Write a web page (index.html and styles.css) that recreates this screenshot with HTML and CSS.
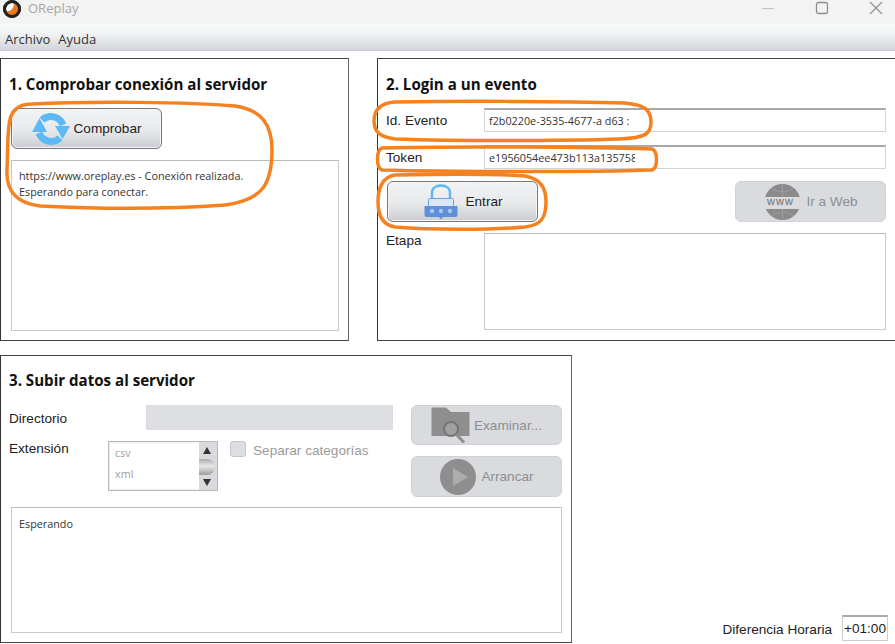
FILE: index.html
```html
<!DOCTYPE html>
<html lang="es">
<head>
    <meta charset="UTF-8">
    <meta name="viewport" content="width=device-width, initial-scale=1.0">
    <title>OReplay</title>
    <link rel="stylesheet" href="styles.css">
</head>
<body>
    <header class="titlebar">
        <svg class="logo" width="20" height="20" viewBox="0 0 20 20">
            <circle cx="10" cy="10" r="7.500" fill="#fff" stroke="#222" stroke-width="3"/>
            <path d="M3.500 12 C8 13 12 10 12 4 C17 6 18 12 14 15.500 C10 18 5 16 3.500 12Z" fill="#f0781e"/>
            <circle cx="10" cy="10" r="7.500" fill="none" stroke="#222" stroke-width="3"/>
        </svg>
        <span class="app-name">OReplay</span>
        <div class="window-btns">
            <svg width="14" height="14" viewBox="0 0 14 14"><path d="M1 7.500H13" stroke="#c4c4c4" stroke-width="1.200"/></svg>
            <svg width="14" height="14" viewBox="0 0 14 14"><rect x="1.500" y="1.500" width="11" height="11" rx="2" fill="none" stroke="#8f8f8f" stroke-width="1.300"/></svg>
            <svg width="14" height="14" viewBox="0 0 14 14"><path d="M1 1L13 13M13 1L1 13" stroke="#8f8f8f" stroke-width="1.100"/></svg>
        </div>
    </header>
    <nav class="menubar">
        <span>Archivo</span>
        <span>Ayuda</span>
    </nav>

    <main class="content">
        <div class="top-row">
            <section class="panel panel-check">
                <h2>1. Comprobar conexión al servidor</h2>
                <button class="btn btn-check">
                    <svg width="38" height="32" viewBox="0 0 38 32">
                        <path d="M10 7 A13 13 0 0 1 31 12" fill="none" stroke="#5cb9f6" stroke-width="7"/>
                        <path d="M28 25 A13 13 0 0 1 7 20" fill="none" stroke="#5cb9f6" stroke-width="7"/>
                        <path d="M23 13H38L30.500 26Z" fill="#5cb9f6"/>
                        <path d="M0 19H15L7.500 5Z" fill="#5cb9f6"/>
                    </svg>
                    <span>Comprobar</span>
                </button>
                <div class="log log-check">
                    <p>https://www.oreplay.es - Conexión realizada.</p>
                    <p>Esperando para conectar.</p>
                </div>
            </section>

            <section class="panel panel-login">
                <h2>2. Login a un evento</h2>
                <div class="field-row row-event">
                    <label>Id. Evento</label>
                    <div class="input"><span class="value">f2b0220e-3535-4677-a d63 :</span></div>
                </div>
                <div class="field-row row-token">
                    <label>Token</label>
                    <div class="input"><span class="value value-token">e1956054ee473b113a135758</span></div>
                </div>
                <div class="login-btns">
                    <button class="btn btn-enter">
                        <svg width="34" height="36" viewBox="0 0 34 36">
                            <path d="M8 15V9 C8 4 12 1.500 17 1.500 C22 1.500 26 4 26 9V15" fill="none" stroke="#5cb9f6" stroke-width="2.500"/>
                            <rect x="4.500" y="14.500" width="25" height="8" rx="1" fill="#dbe7f6" stroke="#6f9fdf" stroke-width="1"/>
                            <path d="M0.500 22H33.500V31 C33.500 32.500 32.500 33 31 33H19L17 35.500L15 33H3 C1.500 33 0.500 32.500 0.500 31Z" fill="#5d90d8"/>
                            <circle cx="8" cy="27" r="2.200" fill="#a9c6f0"/>
                            <circle cx="17" cy="27" r="2.200" fill="#a9c6f0"/>
                            <circle cx="26" cy="27" r="2.200" fill="#a9c6f0"/>
                        </svg>
                        <span>Entrar</span>
                    </button>
                    <button class="btn btn-off btn-web">
                        <svg width="39" height="36" viewBox="0 0 39 36">
                            <circle cx="19.500" cy="18" r="18" fill="#8b8b8b"/>
                            <path d="M19.500 0V36M9 4 C15 9 24 9 30 4M9 32 C15 27 24 27 30 32" fill="none" stroke="#9d9ea1" stroke-width="1"/>
                            <rect x="0" y="13" width="39" height="12" fill="#d9dbdf"/>
                        </svg>
                        <span class="www">www</span>
                        <span>Ir a Web</span>
                    </button>
                </div>
                <div class="field-row row-stage">
                    <label>Etapa</label>
                    <div class="log log-stage"></div>
                </div>
            </section>
        </div>

        <section class="panel panel-upload">
            <h2>3. Subir datos al servidor</h2>
            <div class="upload-body">
                <div class="upload-left">
                    <div class="dir-row">
                        <label>Directorio</label>
                        <div class="dir-input"></div>
                    </div>
                    <div class="ext-row">
                        <label>Extensión</label>
                        <div class="listbox">
                            <div class="list-items">
                                <span>csv</span>
                                <span>xml</span>
                            </div>
                            <div class="scrollbar">
                                <i class="arrow-up"></i>
                                <i class="thumb"></i>
                                <i class="arrow-down"></i>
                            </div>
                        </div>
                        <div class="check-wrap">
                            <span class="checkbox"></span>
                            <span>Separar categorías</span>
                        </div>
                    </div>
                </div>
                <div class="upload-btns">
                    <button class="btn btn-off btn-browse">
                        <svg width="39" height="37" viewBox="0 0 39 37">
                            <path d="M0.500 0.500H15L20 5H38.500V29H0.500Z" fill="#8e8e8e"/>
                            <circle cx="20" cy="22" r="7" fill="#a0a1a3" stroke="#757575" stroke-width="2"/>
                            <path d="M25 27L33 35.500" stroke="#8e8e8e" stroke-width="3"/>
                        </svg>
                        <span>Examinar...</span>
                    </button>
                    <button class="btn btn-off btn-run">
                        <svg width="38" height="38" viewBox="0 0 38 38">
                            <circle cx="19" cy="19" r="18" fill="#8e8e8e"/>
                            <path d="M14 10L29 19L14 28Z" fill="#acadaf"/>
                        </svg>
                        <span>Arrancar</span>
                    </button>
                </div>
            </div>
            <div class="log log-upload">
                <p>Esperando</p>
            </div>
        </section>

        <div class="time-diff">
            <span class="time-label">Diferencia Horaria</span>
            <div class="time-box">+01:00</div>
        </div>
    </main>

    <!-- marcas a mano sobre la captura -->
    <svg class="marks" width="895" height="644" viewBox="0 0 895 644">
        <path d="M32 104 C90 101 190 102 235 106 C262 110 272 125 272 150 C272 185 262 200 225 205 C170 209 100 209 40 206 C15 203 6 190 7 170 C8 150 7 125 11 116 C15 107 22 104 32 104Z"/>
        <path d="M395 102 C450 101 560 101 625 103 C645 105 651 110 651 122 C651 134 645 138 620 139 C560 141 450 141 395 139 C380 137 374 132 374 121 C374 110 380 103 395 102Z"/>
        <path d="M382 148 C450 146 590 147 652 149 C658 151 658 168 652 170 C590 172 450 172 382 170 C376 168 376 150 382 148Z"/>
        <path d="M395 175 C440 174 500 174 525 176 C541 179 546 188 546 202 C546 218 541 225 525 227 C490 230 430 230 395 227 C383 225 378 216 378 202 C378 186 383 177 395 175Z"/>
    </svg>
</body>
</html>
```

FILE: styles.css
```css
* {
    box-sizing: border-box;
}

html, body {
    margin: 0;
    height: 644px;
    overflow: hidden;
}

body {
    position: relative;
    font-family: "Liberation Sans", Arial, sans-serif;
    font-size: 13.600px;
    color: #222;
    background: #fff;
}

.titlebar {
    height: 24px;
    background: #f3f3f3;
    display: flex;
    align-items: center;
    padding-left: 2px;
}

.logo {
    margin-top: -6px;
}

.app-name {
    margin-left: 6px;
    margin-top: -8px;
    font-family: "Open Sans", sans-serif;
    font-size: 13px;
    color: #a6a6a6;
}

.window-btns {
    margin-left: auto;
    display: flex;
    gap: 40px;
    padding-right: 12px;
    margin-top: -9px;
}

.menubar {
    height: 27px;
    background: linear-gradient(#fafbfb, #f2f3f4 35%, #d2d5d9);
    border-bottom: 1px solid #c9ccd0;
    display: flex;
    gap: 8px;
    align-items: center;
    padding: 3px 0 0 5px;
    font-family: "Open Sans", sans-serif;
    font-size: 13px;
    color: #333;
}

.content {
    padding-top: 7px;
}

.top-row {
    display: flex;
    gap: 28px;
}

.panel {
    background: #fff;
    border: 1px solid #444;
    border-left-color: #333;
    border-right-color: #666;
}

.panel h2 {
    margin: 0;
    font-family: "Open Sans", sans-serif;
    font-size: 15.100px;
    font-weight: 700;
    line-height: 20px;
    color: #111;
}

.panel-check {
    width: 349px;
    height: 283px;
    padding: 15px 9px 10px 8px;
}

.panel-login {
    flex: 1;
    height: 283px;
    border-right: 0;
    padding: 15px 9px 10px 8px;
}

.panel-upload {
    width: 572px;
    height: 288px;
    margin-top: 14px;
    padding: 14px 9px 10px 8px;
}

.btn {
    display: flex;
    align-items: center;
    justify-content: center;
    gap: 4px;
    padding: 0;
    font-family: "Liberation Sans", Arial, sans-serif;
    font-size: 13.600px;
    color: #222;
    border: 1px solid #777;
    border-radius: 6px;
    background: linear-gradient(#f2f3f4, #e8e9eb 55%, #cbcdd2);
    box-shadow: inset 0 0 0 1px #f5f5f5;
}

.btn-check {
    width: 151px;
    height: 41px;
    margin: 14px 0 0 2px;
}

.btn-off {
    width: 151px;
    height: 41px;
    color: #8d8f92;
    background: #d9dbdf;
    border-color: #d0d2d6;
    box-shadow: none;
}

.log {
    border: 1px solid #c9c9c9;
    border-top-color: #bbb;
    background: #fff;
    padding: 7px;
    font-family: "Open Sans", sans-serif;
    font-size: 10.800px;
    line-height: 16px;
    color: #333;
}

.log p {
    margin: 0;
}

.log-check {
    width: 328px;
    height: 171px;
    margin: 11px 0 0 2px;
}

.field-row {
    display: flex;
}

.field-row label {
    width: 98px;
    flex: none;
}

.row-event {
    margin-top: 14px;
    align-items: center;
}

.row-token {
    margin-top: 13px;
    align-items: center;
}

.input {
    flex: 1;
    height: 24px;
    border: 1px solid #d4d4d4;
    border-top: 2px solid #a8a8a8;
    display: flex;
    align-items: center;
    padding-left: 4px;
    font-family: "Open Sans", sans-serif;
    font-size: 10.800px;
    color: #333;
}

.value {
    display: block;
    white-space: nowrap;
    overflow: hidden;
}

.value-token {
    width: 146px;
}

.login-btns {
    display: flex;
    justify-content: space-between;
    margin: 12px 0 0 1px;
}

.btn-enter {
    width: 151px;
    height: 41px;
    gap: 7px;
    padding-left: 2px;
}

.btn-web {
    position: relative;
}

.www {
    position: absolute;
    left: 31px;
    top: 13px;
    font-size: 11px;
    letter-spacing: 1px;
    color: #6f6f6f;
}

.row-stage {
    margin-top: 11px;
}

.log-stage {
    flex: 1;
    height: 97px;
}

.upload-body {
    display: flex;
    gap: 18px;
    margin-top: 15px;
}

.upload-left {
    width: 385px;
}

.dir-row {
    display: flex;
    align-items: center;
    height: 25px;
}

.dir-row label {
    width: 137px;
    flex: none;
    padding-top: 2px;
}

.dir-input {
    flex: 1;
    height: 25px;
    background: #dcdee1;
}

.ext-row {
    display: flex;
    margin-top: 11px;
}

.ext-row label {
    width: 99px;
    flex: none;
}

.listbox {
    width: 110px;
    height: 50px;
    display: flex;
    border: 1px solid #b9b9b9;
    box-shadow: inset 0 0 0 1px #eee;
}

.list-items {
    flex: 1;
    display: flex;
    flex-direction: column;
    padding: 3px 0 0 6px;
    gap: 5px;
    font-family: "Open Sans", sans-serif;
    font-size: 10.800px;
    line-height: 16px;
    color: #a0a0a0;
}

.scrollbar {
    width: 18px;
    background: #d8dadd;
    display: flex;
    flex-direction: column;
    align-items: flex-start;
    justify-content: space-between;
    padding: 5px 0 4px;
}

.scrollbar i {
    display: block;
}

.arrow-up {
    margin-left: 4px;
    border: 4px solid transparent;
    border-top: 0;
    border-bottom: 7px solid #333;
}

.arrow-down {
    margin-left: 4px;
    border: 4px solid transparent;
    border-bottom: 0;
    border-top: 7px solid #333;
}

.thumb {
    width: 16px;
    height: 16px;
    border-radius: 0 8px 8px 0;
    background: linear-gradient(#a9abae, #e8e9ea 45%, #9a9c9f);
}

.check-wrap {
    display: flex;
    gap: 7px;
    margin-left: 12px;
    color: #9a9b9d;
    line-height: 20px;
}

.checkbox {
    width: 16px;
    height: 16px;
    border: 1px solid #c4c6c9;
    border-radius: 3px;
    background: #dcdee1;
}

.upload-btns {
    display: flex;
    flex-direction: column;
    gap: 11px;
}

.btn-browse {
    height: 40px;
}

.log-upload {
    width: 551px;
    height: 126px;
    margin: 10px 0 0 2px;
    padding-top: 8px;
}

.time-diff {
    position: absolute;
    right: 7px;
    bottom: 3px;
    display: flex;
    align-items: center;
    gap: 10px;
}

.time-label {
    padding-top: 2px;
}

.time-box {
    width: 46px;
    height: 26px;
    border: 1px solid #ccc;
    border-top: 2px solid #aaa;
    display: flex;
    align-items: center;
    justify-content: center;
}

.marks {
    position: absolute;
    left: 0;
    top: 0;
    pointer-events: none;
}

.marks path {
    fill: none;
    stroke: #f58220;
    stroke-width: 3.500;
}
```
